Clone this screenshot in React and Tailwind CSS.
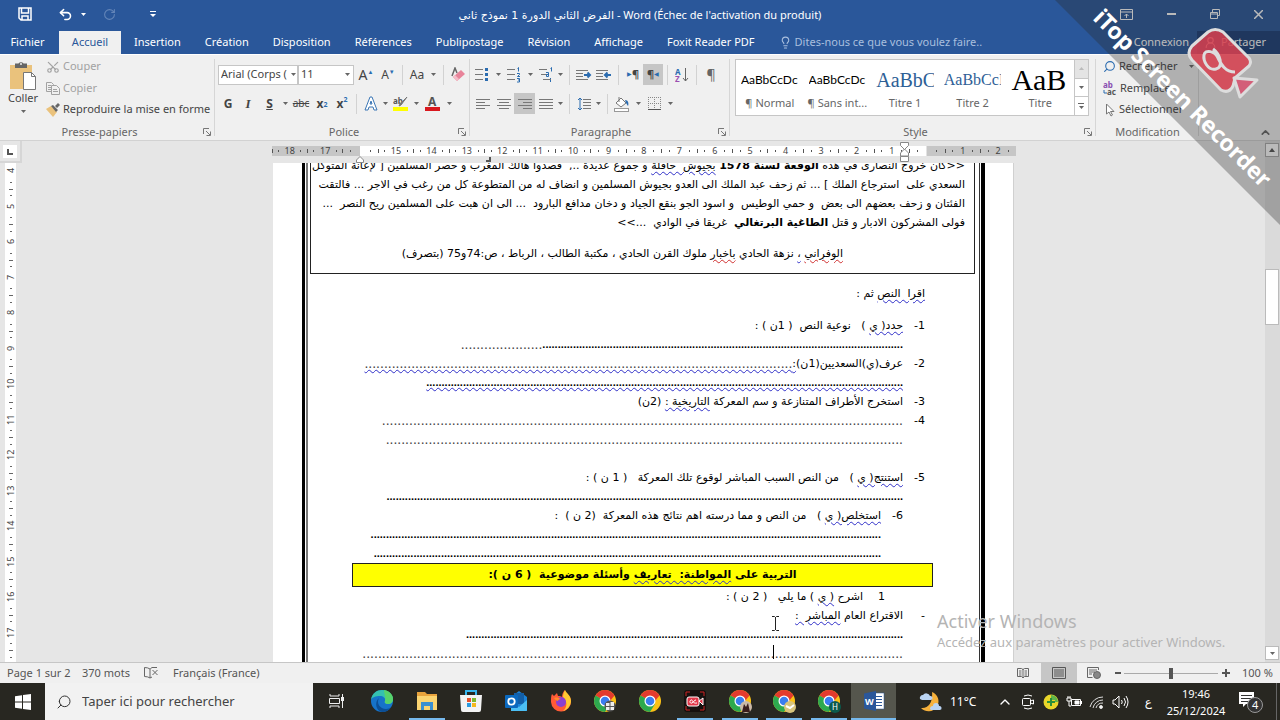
import React from 'react';
import { Scissors, Search, Lightbulb, ChevronUp, MousePointer2, Undo2, RotateCw, UserRound } from 'lucide-react';

const tabs = ['Insertion', 'Création', 'Disposition', 'Références', 'Publipostage', 'Révision', 'Affichage', 'Foxit Reader PDF'];
const hRuler = [18, 17, '', 15, 14, 13, 12, 11, 10, 9, 8, 7, 6, 5, 4, 3, 2, 1, '', 1, 2];
const vRuler = [4, 5, 6, 7, 8, 9, 10, 11, 12, 13, 14, 15, 16, 17];

function Caret({ className = 'w-3' }) {
  return (
    <span className={`flex justify-center shrink-0 ${className}`}>
      <svg width="5" height="3" viewBox="0 0 5 3"><path d="M0 0h5L2.5 3z" fill="#666" /></svg>
    </span>
  );
}

function Sep() {
  return <span className="w-px h-5 mx-1 bg-[#d2d2d2] shrink-0" />;
}

function Tool({ label, className = 'w-5', children }) {
  return (
    <button aria-label={label} className={`h-[21px] flex items-center justify-center shrink-0 ${className}`}>
      {children}
    </button>
  );
}

function Lines({ rows, align = 'left' }) {
  return (
    <svg width="14" height="12" viewBox="0 0 14 12">
      {rows.map((w, i) => (
        <rect key={i} x={align === 'right' ? 14 - w : align === 'center' ? (14 - w) / 2 : 0} y={1 + i * 3} width={w} height="1" fill="#777" />
      ))}
    </svg>
  );
}

function Launcher() {
  return (
    <button aria-label="Options" className="absolute right-1 bottom-1">
      <svg width="8" height="8" viewBox="0 0 8 8" fill="none" stroke="#777"><path d="M.5 6V.5H6M3 3l4 4M7.5 3.5v4h-4" /></svg>
    </button>
  );
}

function Group({ title, className, children, launcher = true }) {
  return (
    <section className={`relative flex flex-col shrink-0 mt-px ${className}`}>
      <div className="flex-1 min-h-0">{children}</div>
      <div className="h-4 shrink-0 text-center text-[11px] leading-4 text-[#666]">{title}</div>
      {launcher && <Launcher />}
      <span className="absolute right-0 top-[3px] bottom-1 w-px bg-[#d6d6d6]" />
    </section>
  );
}

function ListIcon({ marks }) {
  return (
    <svg width="14" height="16" viewBox="0 0 14 16">
      {[2, 7, 12].map((y, i) => (
        <g key={y}>
          <rect x={marks === 'multi' ? i * 2 : 0} y={y} width="8" height="1" fill="#777" />
          {marks === 'dots' && <rect x="10" y={y - 1} width="3" height="3" fill="#2b6cb0" />}
        </g>
      ))}
      {marks === 'nums' && <path d="M10.500 1.500l1-1v4M10 6.500h2.500v1L10.500 9.500h2.500M10 11.500h2.500v1.500h-1.500M12.500 13v2H10" fill="none" stroke="#2b6cb0" />}
      {marks === 'multi' && <path d="M11.500 1.500l1-1v4M7 5.500h2.500v4H7.500v-2h2M11.500 13v2M11.500 11v1" fill="none" stroke="#2b6cb0" />}
    </svg>
  );
}

function IndentIcon({ back }) {
  return (
    <svg width="16" height="12" viewBox="0 0 16 12" fill="none">
      <path d="M0 1.5h12M0 4.5h7M0 7.5h7M0 10.5h12" stroke="#777" />
      <path d={back ? 'M15 6H9M11.5 3.5 9 6l2.500 2.500' : 'M8 6h6M11.500 3.500 14 6l-2.500 2.500'} stroke="#2b6cb0" strokeWidth="2" />
    </svg>
  );
}

function Ribbon() {
  return (
    <div className="flex h-[87px] shrink-0 bg-[#f0f0f0] border-b border-[#d2d2d2] border-t border-t-white text-[11px] text-[#444]">
      <Group title="Presse-papiers" className="w-[215px] [&>div:nth-child(2)]:pr-4">
        <div className="flex">
          <button className="w-[46px] flex flex-col items-center pt-[5px]">
            <svg width="28" height="29" viewBox="0 0 28 29">
              <rect x="1" y="4" width="22" height="24" fill="#eac27c" />
              <path d="M6 2.500h3.500a3 3 0 0 1 5 0H18V7H6z" fill="#666" />
              <circle cx="12" cy="3" r="1" fill="#eee" />
              <path d="M14.500 11.500h8l4 4v13h-12z" fill="#fff" stroke="#777" />
              <path d="M22.500 11.500v4h4" fill="none" stroke="#777" />
            </svg>
            <span className="leading-4">Coller</span>
            <Caret className="w-5 mt-1" />
          </button>
          <div className="flex flex-col text-[#a2a2a2]">
            <button className="flex items-center gap-[3px] h-[21px]"><Scissors size={14} className="-rotate-90" />Couper</button>
            <button className="flex items-center gap-[3px] h-[22px]">
              <svg width="14" height="13" viewBox="0 0 14 13" fill="#f0f0f0" stroke="#a2a2a2"><path d="M.5.5h5l2 2v7h-7zM2 3.500h3M2 5.500h3M2 7.500h3" /><path d="M5.500 3.500h5l3 3v6h-8zM7 7.500h4M7 9.500h5" /></svg>
              Copier
            </button>
            <button className="flex items-center gap-[3px] h-[21px] text-[#444]">
              <svg width="14" height="14" viewBox="0 0 14 14"><path d="M0 6l5-3 6 6-4 5z" fill="#eac27c" /><path d="M5 3l2-1 5 5-2 2zM9 3l3-3 2 2-3 3z" fill="#666" /></svg>
              Reproduire la mise en forme
            </button>
          </div>
        </div>
      </Group>

      <Group title="Police" className="w-[255px] pl-[3px]">
        <div className="flex items-center h-[21px] mt-2">
          <div className="relative flex items-center">
            <select aria-label="Police" className="appearance-none w-20 h-5 pl-[2px] bg-white border border-[#c6c6c6] overflow-hidden"><option>Arial (Corps (</option></select>
            <Caret className="absolute right-px w-2 bg-white pointer-events-none" />
          </div>
          <div className="relative flex items-center">
            <select aria-label="Taille" className="appearance-none w-14 h-5 pl-[2px] bg-white border border-[#c6c6c6]"><option>11</option></select>
            <Caret className="absolute right-px w-3 pointer-events-none" />
          </div>
          <Tool label="Agrandir" className="w-6 text-[14px]">A<sup className="text-[6px] text-[#2b6cb0]">▲</sup></Tool>
          <Tool label="Réduire" className="w-5 text-[12px]">A<sup className="text-[6px] text-[#2b6cb0]">▼</sup></Tool>
          <Sep />
          <Tool label="Casse" className="w-5 text-[12px]">Aa</Tool>
          <Caret />
          <Sep />
          <Tool label="Effacer">
            <svg width="14" height="15" viewBox="0 0 14 15"><path d="M1 9L4 1l2 5" fill="none" stroke="#666" strokeWidth="1.500" /><path d="M2 10l8-7 4 4-8 7z" fill="#e8849a" /><path d="M2 10l2-2 4 4-2 2z" fill="#f4bcc8" /></svg>
          </Tool>
        </div>
        <div className="flex items-center h-[21px] mt-2 text-[12px]">
          <Tool label="Gras" className="w-5 font-bold">G</Tool>
          <Tool label="Italique" className="w-5"><i className="font-['Liberation_Serif',serif] font-bold text-[13px]">I</i></Tool>
          <Tool label="Souligné" className="w-[23px] font-bold underline">S</Tool>
          <Caret className="w-[9px]" />
          <Tool label="Barré" className="w-[22px] line-through text-[10px]">abc</Tool>
          <Tool label="Indice" className="w-5 font-bold">x<sub className="text-[7px] text-[#2b6cb0]">2</sub></Tool>
          <Tool label="Exposant" className="w-5 font-bold">x<sup className="text-[7px] text-[#2b6cb0]">2</sup></Tool>
          <Sep />
          <Tool label="Effets">
            <svg width="14" height="15" viewBox="0 0 14 15"><path d="M1 14L6 1h2l5 13h-3L9 11H5l-1 3zM6 8h2L7 5z" fill="#fff" stroke="#3a76b5" /></svg>
          </Tool>
          <Caret className="w-[9px]" />
          <Tool label="Surlignage" className="w-[22px]">
            <svg width="16" height="17" viewBox="0 0 16 17"><text x="0" y="9" fontSize="8" fontWeight="bold" fill="#555">ab</text><path d="M14 2L8 10l-2 1 1-2z" stroke="#777" fill="#777" /><rect y="12" width="15" height="4" fill="#ff0" /></svg>
          </Tool>
          <Caret className="w-[9px]" />
          <Tool label="Couleur" className="w-6">
            <svg width="16" height="17" viewBox="0 0 16 17"><text x="3" y="11" fontSize="12" fontWeight="bold" fill="#555">A</text><rect y="12" width="15" height="4" fill="#d9181e" /></svg>
          </Tool>
          <Caret className="w-[9px]" />
        </div>
      </Group>

      <Group title="Paragraphe" className="w-[260px] pl-[2px]">
        <div className="flex items-center h-[21px] mt-2">
          <Tool label="Puces"><ListIcon marks="dots" /></Tool><Caret />
          <Tool label="Numéros"><ListIcon marks="nums" /></Tool><Caret />
          <Tool label="Niveaux"><ListIcon marks="multi" /></Tool><Caret className="w-[9px]" />
          <Sep />
          <Tool label="Diminuer"><IndentIcon /></Tool>
          <Tool label="Augmenter"><IndentIcon back /></Tool>
          <Sep />
          <Tool label="Gauche à droite"><span className="text-[#2b6cb0] text-[6px]">▶</span><b>¶</b></Tool>
          <Tool label="Droite à gauche" className="w-5 bg-[#c6c6c6]"><b>¶</b><span className="text-[#2b6cb0] text-[6px]">◀</span></Tool>
          <Sep />
          <Tool label="Trier">
            <svg width="14" height="16" viewBox="0 0 14 16"><text x="0" y="8" fontSize="8" fontWeight="bold" fill="#2b6cb0">A</text><text x="0" y="15" fontSize="8" fontWeight="bold" fill="#9b4fb0">Z</text><path d="M10.500 1v13M8 11l2.500 3 2.500-3" stroke="#666" fill="none" /></svg>
          </Tool>
          <Sep />
          <Tool label="Afficher tout" className="w-5 text-[14px] text-[#666]">¶</Tool>
        </div>
        <div className="flex items-center h-[21px] mt-2">
          <Tool label="Aligner à gauche" className="w-[21px]"><Lines rows={[14, 9, 14, 9]} /></Tool>
          <Tool label="Centrer" className="w-[21px]"><Lines rows={[14, 10, 14, 10]} align="center" /></Tool>
          <Tool label="Aligner à droite" className="w-[21px] bg-[#c6c6c6]"><Lines rows={[14, 9, 14, 9]} align="right" /></Tool>
          <Tool label="Justifier" className="w-[21px]"><Lines rows={[14, 14, 14, 14]} /></Tool>
          <Caret className="w-[9px]" />
          <Sep />
          <Tool label="Interligne">
            <svg width="14" height="14" viewBox="0 0 14 14" fill="none"><path d="M3 1v12M1 3l2-2 2 2M1 11l2 2 2-2" stroke="#2b6cb0" /><path d="M6 2.500h8M6 5.500h8M6 8.500h8M6 11.500h8" stroke="#777" /></svg>
          </Tool>
          <Caret className="w-[9px]" />
          <Sep />
          <Tool label="Trame">
            <svg width="16" height="16" viewBox="0 0 16 16"><path d="M7 2l5 5-5 4-5-4z" fill="#fff" stroke="#777" /><path d="M5 1v5" stroke="#777" /><path d="M11 4c3 0 4 3 3 6l-2-3z" fill="#2b6cb0" /><rect x=".5" y="12.500" width="14" height="3" fill="#fff" stroke="#999" /></svg>
          </Tool>
          <Caret />
          <Tool label="Bordures">
            <svg width="13" height="13" viewBox="0 0 13 13" fill="none" stroke="#888"><path d="M.5 0v12M6.500 0v12M12.500 0v12M0 .5h13M0 6.500h13" strokeDasharray="1 1" /><path d="M0 12.500h13" stroke="#555" /></svg>
          </Tool>
          <Caret />
        </div>
      </Group>

      <Group title="Style" className="w-[366px] pl-[5px]">
        <div className="flex h-[57px] mt-[3px] border border-[#c6c6c6] bg-white w-[354px] text-[11px]">
          {[
            ['AaBbCcDc', '¶ Normal', "font-[Lato,sans-serif] text-[12px] text-black"],
            ['AaBbCcDc', '¶ Sans int...', "font-[Lato,sans-serif] text-[12px] text-black"],
            ['AaBbC', 'Titre 1', "font-['Liberation_Serif',serif] text-[20px] text-[#2e6096]"],
            ['AaBbCcI', 'Titre 2', "font-['Liberation_Serif',serif] text-[16px] text-[#2e6096]"],
            ['AaB', 'Titre', "font-['Liberation_Serif',serif] text-[30px] text-black"],
          ].map(([sample, name, cls]) => (
            <button key={name} className="flex-1 min-w-0 px-[5px] flex flex-col items-center">
              <span className={`w-full h-[35px] leading-[40px] overflow-hidden whitespace-nowrap text-left ${cls}`}>{sample}</span>
              <span className="leading-4 whitespace-nowrap text-[#666]">{name}</span>
            </button>
          ))}
          <div className="w-[14px] border-l border-[#c6c6c6] flex flex-col divide-y divide-[#c6c6c6]">
            <button aria-label="Haut" className="flex-1 bg-[#e4e4e4] flex items-center justify-center"><svg width="5" height="3" viewBox="0 0 5 3"><path d="M0 3h5L2.500 0z" fill="#bbb" /></svg></button>
            <button aria-label="Bas" className="flex-1 flex items-center justify-center"><Caret /></button>
            <button aria-label="Plus" className="flex-1 flex flex-col items-center justify-center gap-[2px]"><span className="w-[6px] h-px bg-[#666]" /><Caret /></button>
          </div>
        </div>
      </Group>

      <Group title="Modification" className="w-[103px]" launcher={false}>
        <div className="flex flex-col pl-[7px]">
          <button className="flex items-center gap-[3px] h-[21px]"><Search size={13} className="-scale-x-100 text-[#2b6cb0]" />Rechercher<Caret className="ml-auto w-4" /></button>
          <button className="flex items-center gap-[3px] h-[22px]">
            <svg width="14" height="16" viewBox="0 0 14 16" fontWeight="bold"><text x="0" y="8" fontSize="8" fill="#8a4fb0">ab</text><text x="4" y="15" fontSize="8" fill="#555">ac</text><path d="M1 10v3h3" stroke="#2b6cb0" fill="none" /></svg>
            Remplacer
          </button>
          <button className="flex items-center gap-[3px] h-[21px] whitespace-nowrap">
            <svg width="13" height="14" viewBox="0 0 13 14"><path d="M3.500 1v10l2.500-2 2 4 1.500-1-2-3.500H11z" fill="#fff" stroke="#777" /></svg>
            Sélectionner
          </button>
        </div>
      </Group>
      <div className="flex-1 flex items-end justify-end pr-2 pb-px"><ChevronUp size={13} strokeWidth={3} className="text-[#666]" /></div>
    </div>
  );
}

/* document body helpers */
function Row({ num, indent, className = '', children }) {
  return (
    <div className={`flex h-[19px] leading-[19px] whitespace-pre ${indent ? 'pr-[76px]' : 'pr-[54px]'} ${className}`}>
      <span className="w-[22px] shrink-0">{num}</span>
      {children}
    </div>
  );
}

function Wavy({ red, children }) {
  return (
    <span className={`underline decoration-wavy decoration-1 underline-offset-2 ${red ? 'decoration-[#d03030]' : 'decoration-[#3030c8]'}`}>{children}</span>
  );
}

function Dots({ n, bold, wavy }) {
  return (
    <span className={`shrink-0 font-['Liberation_Sans',sans-serif] ${bold ? 'text-[11px] font-bold' : 'text-[14px] text-[#444]'} ${wavy ? 'underline decoration-wavy decoration-1 decoration-[#3030c8] underline-offset-1' : ''}`}>
      {'.'.repeat(n)}
    </span>
  );
}

function Document() {
  return (
    <main className="w-[741px] flex-1 min-h-0 pl-[29px] pr-[28px] bg-white border-r border-[#d0d0d0] overflow-hidden">
      <div className="border-l-[3px] border-r-4 border-black h-full">
        <div dir="rtl" className="h-full border-l-2 border-l-[#777] border-r border-r-[#333] mx-px text-black font-['DejaVu_Sans',sans-serif] text-[11px]">
          <div className="h-[111px] ml-[2px] mr-1 pr-[9px] border border-t-0 border-[#222] flex flex-col justify-end overflow-hidden whitespace-pre leading-[19px]">
            <p className="h-[19px] shrink-0">{'<<كان خروج النصارى في هذه '}<b>الوقعة لسنة 1578</b> <Wavy>بجيوش  حافلة</Wavy>{' و جموع عديدة ..,  قصدوا هالك المغرب و حصر المسلمين [ لإعانة المتوكل'}</p>
            <p className="h-[19px] shrink-0">{'السعدي على  استرجاع الملك ] ... ثم زحف عبد الملك الى العدو بجيوش المسلمين و انضاف له من المتطوعة كل من رغب في الاجر ... فالتقت'}</p>
            <p className="h-[19px] shrink-0">{'الفئتان و زحف بعضهم الى بعض  و حمي الوطيس  و اسود الجو بنقع الجياد و دخان مدافع البارود  ... الى ان هبت على المسلمين ريح النصر  ...'}</p>
            <p className="h-[19px] shrink-0">{'فولى المشركون الادبار و قتل '}<b>الطاغية البرتغالي</b>{'  غريقا في الوادي  ...>>'}</p>
            <p className="h-[19px] shrink-0 mt-3 mb-[10px] pr-[122px]"><Wavy red>الوفراني</Wavy> <Wavy>،</Wavy>{' نزهة الحادي '}<Wavy red>باخبار</Wavy>{' ملوك القرن الحادي ، مكتبة الطالب ، الرباط ، ص:74و75 (بتصرف)'}</p>
          </div>

          <p className="h-[19px] leading-[19px] mt-[10px] mb-[13px] pr-[54px] whitespace-pre"><Wavy>اقرا  النص</Wavy> ثم :</p>
          <Row num="1-"><Wavy>حدد( ي</Wavy>{' )   نوعية النص  ( 1ن ) :'}</Row>
          <Row><Dots bold n={118} /><Dots n={21} /></Row>
          <Row num="2-">عرف(ي)السعديين(1ن)<Wavy>:</Wavy><Dots wavy n={110} /></Row>
          <Row><Dots bold wavy n={156} /></Row>
          <Row num="3-">استخرج الأطراف المتنازعة و سم المعركة <Wavy>التاريخية :</Wavy> (2ن)</Row>
          <Row num="4-"><Dots n={134} /></Row>
          <Row className="mb-[19px]"><Dots n={133} /></Row>
          <Row num="5-"><Wavy>استنتج( ي</Wavy>{' )   من النص السبب المباشر لوقوع تلك المعركة   ( 1 ن ) :'}</Row>
          <Row><Dots bold n={169} /></Row>
          <Row num="6-" indent><Wavy>استخلص( ي</Wavy>{' )   من النص و مما درسته اهم نتائج هذه المعركة  (2 ن )  :'}</Row>
          <Row indent><Dots bold n={167} /></Row>
          <Row indent><Dots bold n={166} /></Row>
          <h2 className="h-6 leading-[21px] ml-11 mr-[46px] border border-[#222] bg-[#ff0] text-center font-bold whitespace-pre">التربية على <Wavy>المواطنة:  تعاريف</Wavy>{' وأسئلة موضوعية  ( 6 ن ):'}</h2>
          <Row num="1" className="mr-10">اشرح <Wavy>( ي</Wavy>{' ) ما يلي   ( 2 ن ) :'}</Row>
          <Row num="-">الاقتراع العام <Wavy>المباشر  :</Wavy></Row>
          <Row><Dots bold n={143} /></Row>
          <Row><Dots n={139} /></Row>
        </div>
      </div>
    </main>
  );
}

function Chrome({ badge }) {
  return (
    <svg width="24" height="24" viewBox="0 0 24 24">
      <circle cx="12" cy="12" r="11" fill="#fbc116" />
      <path d="M12 12 2.500 6.500A11 11 0 0 1 21.500 6.500z" fill="#e33b2e" />
      <path d="M12 12 2.500 6.500A11 11 0 0 0 12 23l5-8z" fill="#2da94f" />
      <path d="M12 6.500h9.500L17 12z" fill="#e33b2e" />
      <circle cx="12" cy="12" r="5.500" fill="#fff" />
      <circle cx="12" cy="12" r="4.300" fill="#3a7df0" />
      {badge === 'grid' && <g><circle cx="17" cy="17" r="5.500" fill="#555" /><path d="M13 14h3.500v3H13zM17.500 13H21v4h-3.500zM13 18h3.500v3H13zM17.500 18H21v3h-3.500z" fill="#eee" /></g>}
      {badge === 'photo' && <g><circle cx="18" cy="18" r="6" fill="#cbb9a8" /><path d="M14 23l2-8 2 3 2-4 2 9z" fill="#3a1d1d" /></g>}
      {badge === 'gold' && <g><circle cx="18" cy="18" r="6" fill="#d8c47c" /><path d="M14 17l4 2 4-3" stroke="#fff" strokeWidth="2" fill="none" /></g>}
      {badge === 'H' && <g><circle cx="18" cy="18" r="6" fill="#0c5a4c" /><text x="15" y="21" fontSize="8" fill="#fff">H</text></g>}
    </svg>
  );
}

const apps = [
  { name: 'Vue des tâches', icon: <svg width="16" height="16" viewBox="0 0 16 16" fill="none" stroke="#eee"><path d="M1 1v2h9V1M.5 5.500h10v5H.5zM1 15v-2h9v2M13.500 1v14" /><rect x="12.500" y="4.500" width="2" height="3" fill="#eee" /></svg> },
  { name: 'Edge', icon: <svg width="24" height="24" viewBox="0 0 24 24"><circle cx="12" cy="12" r="11" fill="#1673c9" /><path d="M1 11C2 4 7 1 12 1c7 0 11 5 11 9 0 3-2 5-5 5-2 0-4-1-3-3 1-3-2-5-5-5-4 0-8 1-9 4z" fill="#35c1b0" /><path d="M14 1c6 1 9 5 9 9 0 3-2 5-5 5-2 0-4-1-3-3 1-4-1-7-1-11z" fill="#57d36b" /><path d="M9 9c-3 5 1 11 7 11 2 0 4-1 5-2-2 4-6 5-9 5C6 22 4 13 9 9z" fill="#0c4f96" /></svg> },
  { name: 'Explorateur', run: 'w-9 bg-[#76b9ed]', icon: <svg width="22" height="20" viewBox="0 0 22 20"><path d="M1 1h8l2 2h10v16H1z" fill="#e8a33d" /><path d="M1 5h20v14H1z" fill="#fbd471" /><path d="M5 11h12v8h-3v-4H8v4H5z" fill="#3a8fd0" /></svg> },
  { name: 'Store', icon: <svg width="24" height="24" viewBox="0 0 24 24"><path d="M7 6V2h10v4" fill="none" stroke="#38b6ee" strokeWidth="2" /><path d="M1 6h22l-1 15q0 2-2 2H4q-2 0-2-2z" fill="#f3f3f3" /><path d="M8 9h4v4H8z" fill="#e8502a" /><path d="M13 9h4v4h-4z" fill="#7cb82f" /><path d="M8 14h4v4H8z" fill="#2a9be0" /><path d="M13 14h4v4h-4z" fill="#f5b81c" /></svg> },
  { name: 'Outlook', icon: <svg width="24" height="24" viewBox="0 0 24 24"><path d="M7 8l8-6 8 6v14H7z" fill="#1b83d8" /><path d="M10 4h10v11H10z" fill="#135fa8" /><path d="M7 13l8 5 8-7v10q0 1-1 1H7z" fill="#4cc0f5" /><rect x="1" y="6" width="13" height="13" rx="1" fill="#0b69bf" /><circle cx="7.500" cy="12.500" r="3.200" fill="none" stroke="#fff" strokeWidth="1.800" /></svg> },
  { name: 'Firefox', icon: <svg width="24" height="24" viewBox="0 0 24 24"><path d="M3 5l2 2 3-3 1 3c2 0 3 0 4 1 0-3 1-5 3-7 0 3 6 5 6 11a10 10 0 0 1-20 1C2 9 2 7 3 5z" fill="#ff5a36" /><path d="M14 8c0-3 1-5 2-7 1 3 6 5 6 11 0 5-4 9-8 10 4-3 5-9 0-14z" fill="#ffc931" /><circle cx="12" cy="13" r="5" fill="#8a3fd1" /><path d="M5 9c3-1 5 0 7 1-2 0-3 1-3 2-1 0-3-1-4-3z" fill="#ff8a2b" /></svg> },
  { name: 'Chrome 1', icon: <Chrome badge="grid" /> },
  { name: 'Chrome 2', icon: <Chrome /> },
  { name: 'Screen Recorder', run: 'w-9 bg-[#76b9ed]', icon: <svg width="24" height="24" viewBox="0 0 24 24"><rect x="1" y="1" width="22" height="22" rx="3" fill="#16110f" /><path d="M3 7V3h4M17 3h4v4M21 17v4h-4M7 21H3v-4" fill="none" stroke="#c22" /><rect x="4" y="8" width="12" height="9" rx="2" fill="#e0384a" stroke="#fff" /><path d="M16 12l4-3v7z" fill="#e0384a" stroke="#fff" /><path d="M14 14c-5 1-4-4-6-3s-1 4 1 3 2-3 4-3" fill="none" stroke="#fff" /></svg> },
  { name: 'Chrome 3', run: 'w-9 bg-[#76b9ed]', icon: <Chrome badge="photo" /> },
  { name: 'Chrome 4', run: 'w-9 bg-[#76b9ed]', icon: <Chrome badge="gold" /> },
  { name: 'Chrome 5', run: 'w-9 bg-[#76b9ed]', icon: <Chrome badge="H" /> },
  { name: 'Word', run: 'w-full bg-[#76b9ed]', active: true, icon: <svg width="22" height="20" viewBox="0 0 22 20"><rect x="10" y="2" width="11" height="16" fill="#fff" stroke="#2b579a" strokeWidth=".5" /><path d="M13 5.500h6M13 8.500h6M13 11.500h6M13 14.500h6" stroke="#2b579a" /><path d="M1 2.500 13 0v20L1 17.500z" fill="#2b579a" /><text x="2" y="14" fontSize="9" fontWeight="bold" fill="#fff">W</text></svg> },
];

function Taskbar() {
  return (
    <div className="h-[37px] shrink-0 flex items-stretch bg-[#282721] text-white">
      <button aria-label="Démarrer" className="w-[45px] shrink-0 flex items-center justify-center">
        <svg width="16" height="16" viewBox="0 0 16 16" fill="#fff"><path d="M0 2.200 7 1.200V7.500H0zM8 1l8-1v7.500H8zM0 8.500h7v6.300l-7-1zM8 8.500h8V16l-8-1z" /></svg>
      </button>
      <label className="w-[268px] mr-[2px] shrink-0 flex items-center gap-[10px] pl-[11px] bg-[#f2f2f2] text-[#333]">
        <Search size={16} strokeWidth={1.5} className="-scale-x-100" />
        <input placeholder="Taper ici pour rechercher" className="w-[210px] text-[13px] bg-transparent placeholder:text-[#444] outline-none" />
      </label>
      <nav className="flex w-[581px] shrink-0">
        {apps.map((a) => (
          <button key={a.name} aria-label={a.name} className={`flex-1 flex flex-col items-center justify-between ${a.active ? 'bg-[#55564d]' : ''}`}>
            <span className="flex-1 flex items-center">{a.icon}</span>
            <span className={`h-[2px] ${a.run || 'w-0'}`} />
          </button>
        ))}
      </nav>
      <div className="flex-1 flex items-center justify-end">
        <button className="flex items-center gap-2 text-[12px] mr-auto ml-[22px]">
          <svg width="24" height="24" viewBox="0 0 24 24"><path d="M14 2a10 10 0 1 1-11 16c8 1 12-7 11-16z" fill="#f6b13c" /><path d="M2 9a3 3 0 0 1 3-4 4 4 0 0 1 7 1 2 2 0 0 1 1 4H4z" fill="#b9d3f2" /><path d="M12 19a3 3 0 0 1 3-3 3 3 0 0 1 6 0 2 2 0 0 1 1 4h-9z" fill="#b9d3f2" /></svg>
          11°C
        </button>
        <div className="flex items-center gap-[7px] mr-4">
          <ChevronUp size={16} />
          <svg width="16" height="16" viewBox="0 0 16 16" fill="none" stroke="#fff"><rect x="2.500" y="4.500" width="8" height="7" rx="1" /><path d="M10.500 7l3-1v4l-3-1M4 2q4-2 8 0M4 14q4 2 8 0" /></svg>
          <svg width="16" height="16" viewBox="0 0 16 16"><circle cx="8" cy="8" r="7.500" fill="#e9d62a" /><path d="M8 1a7 7 0 0 1 7 7h-3V6H8z" fill="#5fb54a" /><path d="M8 4v8M4 8h8" stroke="#2a8f3a" strokeWidth="2" /></svg>
          <svg width="16" height="16" viewBox="0 0 16 16" fill="none" stroke="#fff"><path d="M5.500 5.500h9v6h-9zM15.500 7v3M1 4h4v3H1zM2 2v2M4 2v2M3 7v5h2" /><path d="M9 7h4v3H9z" fill="#fff" /></svg>
          <svg width="16" height="16" viewBox="0 0 16 16" fill="none" stroke="#ddd"><path d="M1 13A13 13 0 0 1 14 3M4 14A10 10 0 0 1 14 6M7 14a7 7 0 0 1 7-5" /><circle cx="12" cy="13" r="1.500" fill="#fff" /></svg>
          <svg width="17" height="16" viewBox="0 0 17 16" fill="none" stroke="#fff"><path d="M1 6h2l4-4v12L3 10H1zM9.500 6q1.500 2 0 4M12 4q3 4 0 8M14 2q4 6 0 12" /></svg>
        </div>
        <span className="font-['DejaVu_Sans',sans-serif] text-[12px] mr-[14px]">ع</span>
        <div className="text-[11px] leading-[17px] text-center w-[60px]">
          <div>19:46</div>
          <div>25/12/2024</div>
        </div>
        <button aria-label="Notifications" className="ml-3 mr-3">
          <svg width="26" height="24" viewBox="0 0 26 24"><path d="M1 2h15v12H8l-3 3v-3H1z" fill="#fff" /><path d="M3 5.500h11M3 8.500h11M3 11.500h7" stroke="#333" /><circle cx="17" cy="15" r="7.500" fill="#333" stroke="#999" /><text x="14" y="19" fontSize="11" fill="#fff">4</text></svg>
        </button>
        <span className="w-px h-full bg-[#666] mr-[3px]" />
      </div>
    </div>
  );
}

export default function App() {
  return (
    <div className="relative h-screen flex flex-col overflow-hidden bg-[#e6e6e6] font-['Noto_Sans',sans-serif]">
      {/* Title bar */}
      <header className="bg-[#2a579a] text-white shrink-0">
        <div className="grid grid-cols-[1fr_auto_1fr] items-center h-7 text-[11px]">
          <div className="flex items-center pl-[18px]">
            <svg width="14" height="14" viewBox="0 0 14 14" fill="none" stroke="#fff" strokeWidth="1.500"><path d="M1 1h12v12H3l-2-2zM3.500 1v5h7V1M4 13V9h6v4" /></svg>
            <Undo2 size={15} strokeWidth={2.5} className="ml-[26px]" />
            <svg width="5" height="3" viewBox="0 0 5 3" className="ml-2"><path d="M0 0h5L2.500 3z" fill="#fff" /></svg>
            <RotateCw size={13} className="ml-[17px] text-[#6385b8]" />
            <svg width="6" height="7" viewBox="0 0 6 7" className="ml-[34px]"><path d="M0 .5h6" stroke="#fff" /><path d="M0 3h6L3 6z" fill="#fff" /></svg>
          </div>
          <h1 className="pt-1 whitespace-nowrap"><bdi className="font-['DejaVu_Sans',sans-serif]">الفرض الثاني الدورة 1 نموذج ثاني</bdi> - Word (Échec de l'activation du produit)</h1>
          <div className="flex justify-end items-center gap-[34px] pr-[17px]">
            <svg width="13" height="11" viewBox="0 0 13 11" fill="none" stroke="#fff"><path d="M.5.5h12v10H.5zM.5 3h12M6.500 9V5M4.500 7l2-2 2 2" /></svg>
            <svg width="9" height="2" viewBox="0 0 9 2"><path d="M0 1h9" stroke="#fff" strokeWidth="2" /></svg>
            <svg width="10" height="10" viewBox="0 0 10 10" fill="none" stroke="#fff"><path d="M.5 3.500h7v6h-7zM.5 5h7M2.500 3V.5h7v6H8" /></svg>
            <svg width="9" height="9" viewBox="0 0 9 9"><path d="M0 0l9 9M9 0L0 9" stroke="#fff" strokeWidth="1.500" /></svg>
          </div>
        </div>
        <nav className="flex items-stretch h-[26px] pt-[3px] text-[11px]">
          <button className="w-[59px] pr-1">Fichier</button>
          <button className="w-[62px] mr-px bg-[#f0f0f0] text-[#2a579a]">Accueil</button>
          {tabs.map((t) => <button key={t} className="px-3 whitespace-nowrap">{t}</button>)}
          <label className="flex items-center gap-[3px] ml-3 text-[#a9bfde]">
            <Lightbulb size={13} />
            <input placeholder="Dites-nous ce que vous voulez faire.." className="w-[200px] bg-transparent outline-none placeholder:text-[#a9bfde]" />
          </label>
          <button className="ml-auto px-2">Connexion</button>
          <button className="w-[83px] flex items-center gap-1 pl-[7px] bg-[#1b3f78]"><UserRound size={13} />Partager</button>
        </nav>
      </header>

      <Ribbon />

      {/* Work area */}
      <div className="flex-1 min-h-0 flex">
        <aside className="w-[22px] shrink-0 flex flex-col">
          <div className="h-[22px] shrink-0 flex items-center justify-center border-r-2 border-b-2 border-[#d6d6d6]">
            <svg width="14" height="13" viewBox="0 0 14 13"><rect width="14" height="13" fill="#fff" /><path d="M5 4v5h5" stroke="#555" strokeWidth="2" fill="none" /></svg>
          </div>
          <div className="flex-1 min-h-0 w-[11px] ml-[5px] pt-[2px] bg-white overflow-hidden flex flex-col text-[9px] leading-[9px] text-[#444]">
            {vRuler.map((n) => (
              <div key={n} className="flex-1 min-h-0 flex flex-col items-center justify-between pb-1">
                <span className="h-[11px] flex items-center justify-center [writing-mode:vertical-rl] rotate-180">{n}</span>
                <span className="w-[2px] h-px bg-[#666]" />
                <span className="w-1 h-px bg-[#666]" />
                <span className="w-[2px] h-px bg-[#666]" />
              </div>
            ))}
          </div>
        </aside>

        <div className="flex-1 min-w-0 flex flex-col items-center">
          <div className="h-[22px] shrink-0 w-[744px] flex items-center pb-[2px] relative">
            <div className="flex w-full h-[10px] leading-[10px] text-[9px] text-[#444] bg-[linear-gradient(to_right,#c6c6c6_88px,#fff_88px,#fff_654px,#c6c6c6_655px)]">
              {hRuler.map((n, i) => (
                <div key={i} className="flex-1 min-w-0 flex items-center">
                  <span className="w-px h-1 bg-[#555]" />
                  <span className="flex-1 flex items-center justify-evenly">
                    <span className="w-px h-[2px] bg-[#555]" />
                    <span className="min-w-1 text-center">{n}</span>
                    <span className="w-px h-[2px] bg-[#555]" />
                  </span>
                </div>
              ))}
            </div>
            {/* margin markers */}
            <svg width="8" height="7" viewBox="0 0 8 7" className="absolute left-[84px] bottom-0"><path d="M.5 6.500V4L4 .5 7.500 4v2.500z" fill="#fff" stroke="#888" /></svg>
            <svg width="5" height="5" viewBox="0 0 5 5" className="absolute left-[214px] bottom-[1px]"><path d="M4 0v4H0" fill="none" stroke="#555" strokeWidth="2" /></svg>
            <svg width="9" height="20" viewBox="0 0 9 20" className="absolute left-[628px] top-[1px]"><path d="M.5.5h8v3l-4 4-4-4zM.5 14v-3l4-4 4 4v3zM.5 14.500h8v5h-8z" fill="#fff" stroke="#888" /></svg>
          </div>
          <Document />
        </div>

        <div className="w-[15px] shrink-0 flex flex-col bg-[#dadada] pr-px">
          <button aria-label="Défiler vers le haut" className="h-[14px] mt-[2px] bg-white border border-[#aaa] flex items-center justify-center"><svg width="6" height="4" viewBox="0 0 6 4"><path d="M0 4h6L3 0z" fill="#555" /></svg></button>
          <div className="mt-[112px] h-[56px] bg-white border border-[#bbb]" />
          <button aria-label="Défiler vers le bas" className="h-[14px] mt-auto mb-[2px] bg-white border border-[#bbb] flex items-center justify-center"><Caret /></button>
        </div>
      </div>

      {/* Status bar */}
      <footer className="h-[21px] shrink-0 flex items-center bg-[#f0f0f0] border-t border-[#c6c6c6] text-[11px] text-[#555] pl-[7px] pr-2">
        <span className="w-[75px]">Page 1 sur 2</span>
        <span className="w-[62px]">370 mots</span>
        <svg width="14" height="12" viewBox="0 0 14 12" fill="none" stroke="#666" className="mr-[15px]"><path d="M8 .5Q6 2 6 2 4 .5.5.5v9Q4 9.500 6 11l2-1M6 2v9M8.500 3l5 5M13.500 3l-5 5M8 .5h5" /></svg>
        <span>Français (France)</span>
        <div className="ml-auto flex items-center self-stretch">
          <svg width="12" height="12" viewBox="0 0 12 12" fill="none" stroke="#666" className="mr-3"><path d="M.5 1.500h4L6 2.500l1.500-1h4v8h-4L6 11 4.500 9.500h-4zM6 2v9M2 4h2.500M2 6h2.500M2 8h2.500M7.500 4H10M7.500 6H10M7.500 8H10" /></svg>
          <span className="w-9 h-full bg-[#c6c6c6] flex items-center justify-center"><svg width="14" height="12" viewBox="0 0 14 12" fill="none" stroke="#555"><path d="M.5.5h13v11H.5zM2 3h10M2 5h10M2 7h10M2 9h10" /></svg></span>
          <svg width="14" height="12" viewBox="0 0 14 12" fill="none" stroke="#666" className="mx-[10px]"><path d="M11.500 3V.5H.5v10h5M2 3h8M2 5h6M2 7h3" /><circle cx="10" cy="8" r="3.500" fill="#888" /></svg>
          <button aria-label="Zoom arrière" className="w-[6px] h-[2px] bg-[#555] ml-1 mr-[3px]" />
          <input type="range" aria-label="Zoom" defaultValue="50" className="appearance-none w-[94px] h-px bg-[#aaa] [&::-webkit-slider-thumb]:appearance-none [&::-webkit-slider-thumb]:w-1 [&::-webkit-slider-thumb]:h-[11px] [&::-webkit-slider-thumb]:bg-[#555]" />
          <button aria-label="Zoom avant" className="ml-1 mr-3"><svg width="8" height="8" viewBox="0 0 8 8"><path d="M0 4h8M4 0v8" stroke="#555" strokeWidth="2" /></svg></button>
          <span className="w-[30px] whitespace-nowrap">100 %</span>
        </div>
      </footer>

      <Taskbar />

      {/* Caret and mouse pointer */}
      <span className="absolute left-[773px] top-[645px] w-px h-[14px] bg-black" />
      <svg width="7" height="15" viewBox="0 0 7 15" fill="none" stroke="#222" className="absolute left-[772px] top-[616px]"><path d="M0 .5h2.500l1 1 1-1H7M3.500 1v13M0 14.500h2.500l1-1 1 1H7" /></svg>

      {/* Activation notice */}
      <div className="absolute right-12 bottom-[68px] w-[295px] whitespace-nowrap text-[#b4b4b4] pointer-events-none">
        <div className="text-[18px] leading-[22px]">Activer Windows</div>
        <div className="text-[13px] leading-5">Accédez aux paramètres pour activer Windows.</div>
      </div>

      {/* Recorder watermark */}
      <svg width="226" height="226" viewBox="0 0 226 226" className="absolute top-0 right-0 pointer-events-none">
        <path d="M1 0h225v225z" fill="#282828" fillOpacity=".32" />
        <g stroke="#ddd" strokeWidth="3" strokeLinejoin="round" fillOpacity=".85">
          <path d="M154 32q7-5 15 0l26 26q3 4 0 8l-14 12-2 8q-4 8-12 4l-29-30q-6-7 0-14z" fill="#d9404f" />
          <path d="M180 78l23 2-17 17z" fill="#d9506e" />
          <path d="M181 72c-10 0-14-8-17-14-3-7-13-9-14-3s4 16 12 14 4-15-3-20" fill="none" />
        </g>
        <text transform="translate(38 19) rotate(45)" fontFamily="Noto Sans" fontWeight="bold" fontSize="23" fill="#fff">iTop Screen Recorder</text>
      </svg>
    </div>
  );
}
